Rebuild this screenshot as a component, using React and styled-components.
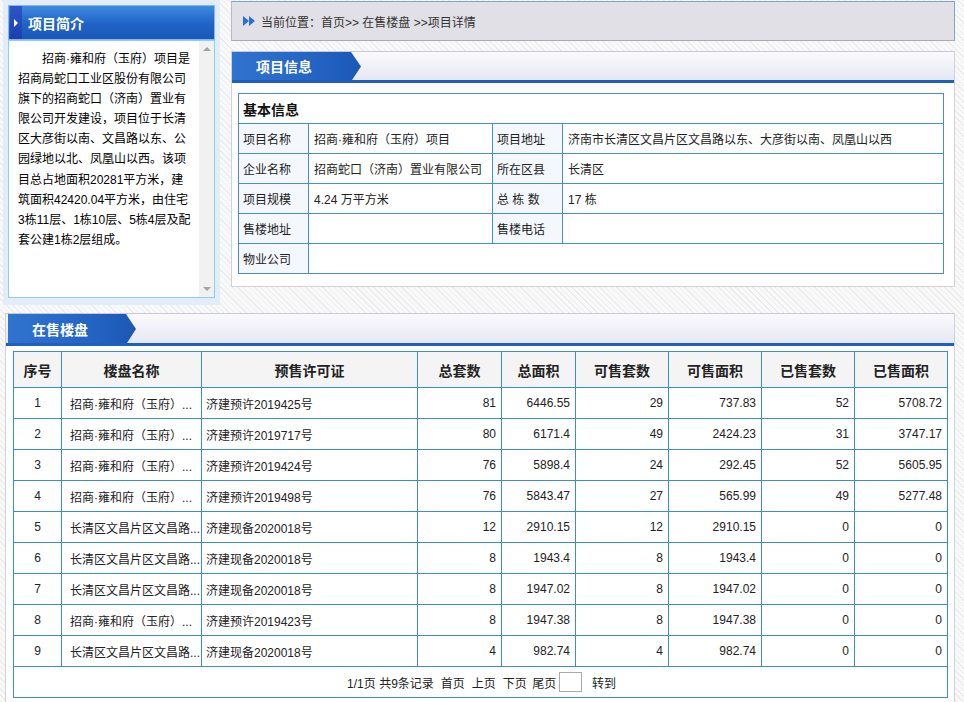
import React from "react";
import styled, { createGlobalStyle } from "styled-components";

const GlobalStyle = createGlobalStyle`
  body {
    margin: 0;
    background: repeating-linear-gradient(45deg, #ececec 0 1px, #f9f9f9 1px 4px);
    font-family: "Liberation Sans", "Noto Sans CJK SC", sans-serif;
    font-size: 12px;
    color: #222;
  }
  * { box-sizing: border-box; }
`;

const Page = styled.div`
  width: 964px;
  padding-bottom: 8px;
`;

const TopRow = styled.div`
  display: flex;
  align-items: flex-start;
  height: 305px;
`;

const IntroPanel = styled.div`
  margin-left: 3px;
  width: 217px;
  height: 305px;
  background: #e3edf9;
  padding: 5px 5px 0 5px;
`;

const IntroHeader = styled.div`
  height: 35px;
  display: flex;
  align-items: center;
  border: 1px solid #8ab6ec;
  background: linear-gradient(#3e8ae0, #1f63c6 55%, #1b58b8);
  color: #fff;
  font-weight: bold;
  font-size: 14px;
`;

const HeaderMark = styled.span`
  width: 12px;
  height: 33px;
  margin-left: 1px;
  margin-right: 6px;
  background: linear-gradient(#2d56c8, #1c3fae);
  display: flex;
  align-items: center;
  justify-content: center;
  &::after {
    content: "";
    border-left: 4px solid #fff;
    border-top: 4px solid transparent;
    border-bottom: 4px solid transparent;
  }
`;

const IntroBody = styled.div`
  height: 258px;
  display: flex;
  background: #fff;
  border: 1px solid #8ccdf4;
`;

const IntroText = styled.p`
  margin: 0;
  padding: 8px 0 0 9px;
  width: 182px;
  line-height: 20.1px;
  color: #000;
`;

const IntroLine = styled.span`
  display: block;
  white-space: nowrap;
  padding-left: ${p => (p.$first ? 24 : 0)}px;
`;

const FakeScroll = styled.div`
  margin-left: auto;
  width: 15px;
  background: #f1f1f1;
  display: flex;
  flex-direction: column;
  justify-content: space-between;
  align-items: center;
  padding: 6px 0 6px;
`;

const ScrollArrow = styled.span`
  border-left: 4px solid transparent;
  border-right: 4px solid transparent;
  ${p => (p.$down ? "border-top: 4px solid #a3a3a3;" : "border-bottom: 4px solid #a3a3a3;")}
`;

const MainCol = styled.div`
  margin-left: 11px;
  width: 724px;
`;

const Breadcrumb = styled.div`
  margin-top: 1px;
  height: 40px;
  display: flex;
  align-items: center;
  padding-left: 11px;
  gap: 6px;
  background: #e1e0e6;
  border: 1px solid;
  border-color: #7fa3d9 #7fa3d9 #a9a9bb #b9b9c4;
  color: #333;
`;

const Panel = styled.div`
  background: #fff;
  border: 1px solid #d2d2d2;
  border-top-color: #c8c8dc;
`;

const InfoPanel = styled(Panel)`
  margin-top: 10px;
  height: 236px;
`;

const SalePanel = styled(Panel)`
  margin: 8px 0 0 5px;
  width: 950px;
  padding-bottom: 5px;
`;

const TabBar = styled.div`
  height: ${p => p.$h}px;
  border-bottom: 3px solid #1e5fc0;
  background: linear-gradient(#fafafd, #e7e7f3);
  display: flex;
  align-items: stretch;
  padding-left: ${p => p.$inset}px;
`;

const Tab = styled.div`
  width: ${p => p.$w}px;
  padding-left: 24px;
  display: flex;
  align-items: center;
  color: #fff;
  font-weight: bold;
  font-size: 14px;
  background: linear-gradient(90deg, #2f74cf, #2465c4 60%, #1c58b6);
  clip-path: polygon(0 0, calc(100% - 10px) 0, 100% 52%, calc(100% - 9px) 100%, 0 100%);
`;

const InfoTable = styled.table`
  margin: 10px 0 0 6px;
  width: 706px;
  border-collapse: collapse;
  td {
    border: 1px solid #4a8bd9;
    height: 30px;
    padding: 0 0 0 4px;
    color: #222;
    white-space: nowrap;
  }
`;

const TitleCell = styled.td`
  && {
    font-weight: bold;
    font-size: 14px;
    color: #111;
  }
`;

const LabelCell = styled.td`
  && {
    background: #f4f8fd;
    width: ${p => p.$w}px;
  }
`;

const ValueCell = styled.td`
  && {
    padding-left: 5px;
    width: ${p => p.$w}px;
  }
`;

const SaleTable = styled.table`
  margin: 5px 0 0 7px;
  width: 934px;
  border-collapse: collapse;
  table-layout: fixed;
  th, td {
    border: 1px solid #3f89da;
    padding: 0;
    white-space: nowrap;
    overflow: hidden;
  }
  th {
    height: 36px;
    background: #f4f4f4;
    font-size: 14px;
    font-weight: bold;
    color: #222;
  }
  td {
    height: 31px;
    color: #222;
  }
`;

const Cell = styled.td`
  && {
    text-align: ${p => p.$align || "right"};
    padding: ${p => (p.$align === "left" ? `0 0 0 ${p.$pad}px` : p.$align === "center" ? "0" : "0 5px 0 0")};
  }
`;

const PagerCell = styled.td`
  && {
    text-align: center;
    height: 31px;
    padding-left: 2px;
  }
`;

const PagerItem = styled.span`
  margin: 0 ${p => p.$gap || 3.5}px;
  vertical-align: middle;
`;

const PageInput = styled.input`
  width: 23px;
  height: 20px;
  border: 1px solid #aaa;
  vertical-align: middle;
  margin: 0 6px 0 1px;
  padding: 0;
`;

const cols = [48, 140, 216, 84, 74, 93, 93, 93, 93];
const heads = ["序号", "楼盘名称", "预售许可证", "总套数", "总面积", "可售套数", "可售面积", "已售套数", "已售面积"];

const ZS = "招商·雍和府（玉府）...";
const CQ = "长清区文昌片区文昌路...";

const rows = [
  [ZS, "济建预许2019425号", 81, "6446.55", 29, "737.83", 52, "5708.72"],
  [ZS, "济建预许2019717号", 80, "6171.4", 49, "2424.23", 31, "3747.17"],
  [ZS, "济建预许2019424号", 76, "5898.4", 24, "292.45", 52, "5605.95"],
  [ZS, "济建预许2019498号", 76, "5843.47", 27, "565.99", 49, "5277.48"],
  [CQ, "济建现备2020018号", 12, "2910.15", 12, "2910.15", 0, 0],
  [CQ, "济建现备2020018号", 8, "1943.4", 8, "1943.4", 0, 0],
  [CQ, "济建现备2020018号", 8, "1947.02", 8, "1947.02", 0, 0],
  [ZS, "济建预许2019423号", 8, "1947.38", 8, "1947.38", 0, 0],
  [CQ, "济建现备2020018号", 4, "982.74", 4, "982.74", 0, 0],
];

const intro = [
  "招商·雍和府（玉府）项目是",
  "招商局蛇口工业区股份有限公司",
  "旗下的招商蛇口（济南）置业有",
  "限公司开发建设，项目位于长清",
  "区大彦街以南、文昌路以东、公",
  "园绿地以北、凤凰山以西。该项",
  "目总占地面积20281平方米，建",
  "筑面积42420.04平方米，由住宅",
  "3栋11层、1栋10层、5栋4层及配",
  "套公建1栋2层组成。",
];

const Arrows = () => (
  <svg width="12" height="10" viewBox="0 0 12 10">
    <path d="M0 0 L6 5 L0 10 Z M6 0 L12 5 L6 10 Z" fill="#2b6fd0" />
  </svg>
);

export default function App() {
  return (
    <Page>
      <GlobalStyle />
      <TopRow>
        <IntroPanel>
          <IntroHeader>
            <HeaderMark />
            项目简介
          </IntroHeader>
          <IntroBody>
            <IntroText>
              {intro.map((l, i) => (
                <IntroLine key={i} $first={i === 0}>{l}</IntroLine>
              ))}
            </IntroText>
            <FakeScroll>
              <ScrollArrow />
              <ScrollArrow $down />
            </FakeScroll>
          </IntroBody>
        </IntroPanel>

        <MainCol>
          <Breadcrumb>
            <Arrows />
            <span>当前位置：首页&gt;&gt; 在售楼盘 &gt;&gt;项目详情</span>
          </Breadcrumb>

          <InfoPanel>
            <TabBar $h={31} $inset={0}>
              <Tab $w={129}>项目信息</Tab>
            </TabBar>
            <InfoTable>
              <tbody>
                <tr>
                  <TitleCell colSpan={4}>基本信息</TitleCell>
                </tr>
                <tr>
                  <LabelCell $w={70}>项目名称</LabelCell>
                  <ValueCell $w={184}>招商·雍和府（玉府）项目</ValueCell>
                  <LabelCell $w={70}>项目地址</LabelCell>
                  <ValueCell>济南市长清区文昌片区文昌路以东、大彦街以南、凤凰山以西</ValueCell>
                </tr>
                <tr>
                  <LabelCell>企业名称</LabelCell>
                  <ValueCell>招商蛇口（济南）置业有限公司</ValueCell>
                  <LabelCell>所在区县</LabelCell>
                  <ValueCell>长清区</ValueCell>
                </tr>
                <tr>
                  <LabelCell>项目规模</LabelCell>
                  <ValueCell>4.24 万平方米</ValueCell>
                  <LabelCell>总 栋 数</LabelCell>
                  <ValueCell>17 栋</ValueCell>
                </tr>
                <tr>
                  <LabelCell>售楼地址</LabelCell>
                  <ValueCell></ValueCell>
                  <LabelCell>售楼电话</LabelCell>
                  <ValueCell></ValueCell>
                </tr>
                <tr>
                  <LabelCell>物业公司</LabelCell>
                  <ValueCell colSpan={3}></ValueCell>
                </tr>
              </tbody>
            </InfoTable>
          </InfoPanel>
        </MainCol>
      </TopRow>

      <SalePanel>
        <TabBar $h={32} $inset={2}>
          <Tab $w={128}>在售楼盘</Tab>
        </TabBar>
        <SaleTable>
          <colgroup>
            {cols.map((w, i) => (
              <col key={i} style={{ width: w }} />
            ))}
          </colgroup>
          <thead>
            <tr>
              {heads.map(h => (
                <th key={h}>{h}</th>
              ))}
            </tr>
          </thead>
          <tbody>
            {rows.map((r, i) => (
              <tr key={i}>
                <Cell $align="center">{i + 1}</Cell>
                <Cell $align="left" $pad={8}>{r[0]}</Cell>
                <Cell $align="left" $pad={4}>{r[1]}</Cell>
                {r.slice(2).map((v, j) => (
                  <Cell key={j}>{v}</Cell>
                ))}
              </tr>
            ))}
            <tr>
              <PagerCell colSpan={9}>
                <PagerItem>1/1页 共9条记录</PagerItem>
                <PagerItem>首页</PagerItem>
                <PagerItem>上页</PagerItem>
                <PagerItem>下页</PagerItem>
                <PagerItem $gap={2}>尾页</PagerItem>
                <PageInput type="text" />
                <PagerItem>转到</PagerItem>
              </PagerCell>
            </tr>
          </tbody>
        </SaleTable>
      </SalePanel>
    </Page>
  );
}
